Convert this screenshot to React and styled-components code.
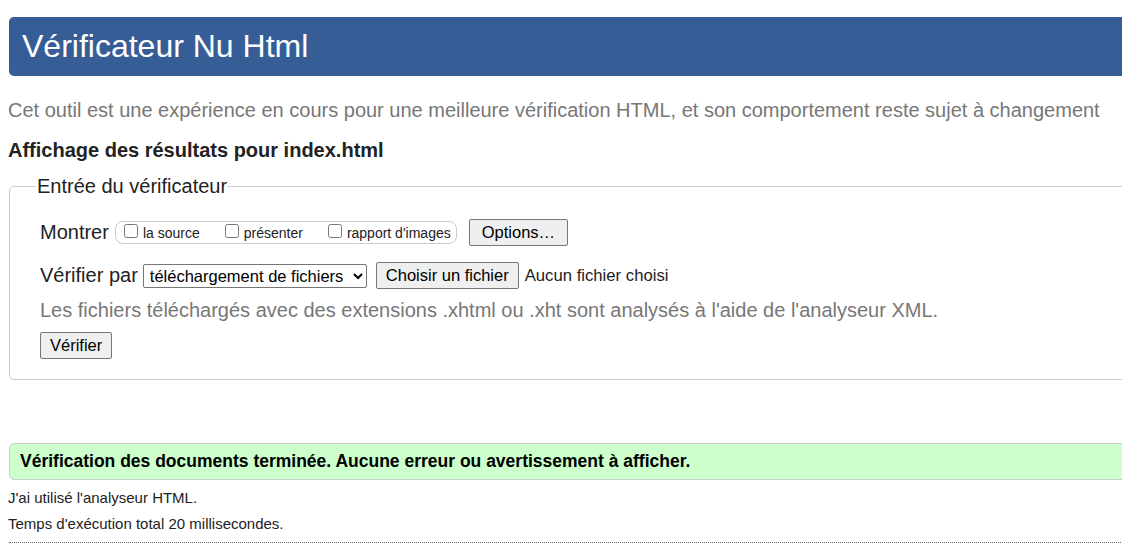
import styled, { createGlobalStyle } from "styled-components"

const GlobalStyle = createGlobalStyle`
	html, body {
		margin: 0;
		padding: 0;
		background: #fff;
		overflow: hidden;
	}
	body {
		font-family: "Liberation Sans", Arial, sans-serif;
		color: #222;
	}
`

export default function App() {
	const shows = ["la source", "présenter", "rapport d'images"]

	return (
		<Page>
			<GlobalStyle />
			<Header>
				<Title>Vérificateur Nu Html</Title>
			</Header>
			<Intro>
				Cet outil est une expérience en cours pour une meilleure vérification HTML, et son comportement reste sujet à changement
			</Intro>
			<Heading>Affichage des résultats pour index.html</Heading>

			<Fieldset>
				<Legend>Entrée du vérificateur</Legend>
				<FieldBody>
					<Row $space="16px">
						<RowLabel>Montrer</RowLabel>
						<CheckGroup>
							{shows.map(s => (
								<CheckItem key={s}>
									<input type="checkbox" />
									<span>{s}</span>
								</CheckItem>
							))}
						</CheckGroup>
						<Button $big>Options…</Button>
					</Row>
					<Row $gap="9px">
						<RowLabel $small>Vérifier par</RowLabel>
						<Select defaultValue="file">
							<option value="file">téléchargement de fichiers</option>
							<option value="url">adresse</option>
							<option value="text">saisie de texte</option>
						</Select>
						<FilePick>
							<Button>Choisir un fichier</Button>
							<span>Aucun fichier choisi</span>
						</FilePick>
					</Row>
					<Help>
						Les fichiers téléchargés avec des extensions .xhtml ou .xht sont analysés à l'aide de l'analyseur XML.
					</Help>
					<div>
						<Button>Vérifier</Button>
					</div>
				</FieldBody>
			</Fieldset>

			<Success>Vérification des documents terminée. Aucune erreur ou avertissement à afficher.</Success>
			<Details>
				<p>J'ai utilisé l'analyseur HTML.</p>
				<p>Temps d'exécution total 20 millisecondes.</p>
			</Details>
			<Rule />
		</Page>
	)
}

const Page = styled.div`
	width: 1122px;
	height: 553px;
	overflow: hidden;
	display: flex;
	flex-direction: column;
	padding-top: 17px;
	box-sizing: border-box;
`
const Header = styled.header`
	margin-left: 9px;
	margin-right: -20px;
	height: 59px;
	flex-shrink: 0;
	background: #365d95;
	border-radius: 5px 0 0 5px;
	display: flex;
	align-items: center;
	padding-left: 13px;
`
const Title = styled.h1`
	margin: 0;
	font-size: 32px;
	font-weight: normal;
	color: #fff;
`
const Intro = styled.p`
	margin: 22px 0 0 8px;
	font-size: 20px;
	line-height: 25px;
	color: #777;
	white-space: nowrap;
`
const Heading = styled.h2`
	margin: 16px 0 0 8px;
	font-size: 20px;
	line-height: 23px;
	font-weight: bold;
	color: #222;
`
const Fieldset = styled.fieldset`
	margin: 13px -20px 0 9px;
	padding: 0;
	border: 1px solid #ccc;
	border-radius: 5px;
	min-width: 0;
	flex-shrink: 0;
`
const Legend = styled.legend`
	padding: 0 1px;
	margin-left: 26px;
	font-size: 20px;
	line-height: 23px;
	color: #222;
`
const FieldBody = styled.div`
	display: flex;
	flex-direction: column;
	padding: 21px 0 20px 30px;
`
const Row = styled.div`
	display: flex;
	align-items: center;
	gap: ${p => p.$gap || "0"};
	margin-bottom: ${p => p.$space || "17px"};
`
const RowLabel = styled.span`
	font-size: 20px;
	color: #222;
	margin-right: ${p => (p.$small ? "-4px" : "6px")};
`
const CheckGroup = styled.span`
	display: inline-flex;
	align-items: center;
	height: 21px;
	border: 1px solid #ccc;
	border-radius: 8px;
	padding: 0 5px 0 6px;
	margin-right: 12px;
`
const CheckItem = styled.label`
	display: inline-flex;
	align-items: center;
	font-size: 14px;
	color: #222;
	margin-right: 23px;

	&:last-child {
		margin-right: 0;
	}

	input {
		margin: 0 5px 3px 2px;
		width: 14px;
		height: 14px;
	}
`
const Button = styled.button`
	font-family: "Liberation Sans", Arial, sans-serif;
	font-size: 16.5px;
	color: #000;
	background: #efefef;
	border: 1px solid #767676;
	border-radius: 2px;
	height: 27px;
	padding: 0 ${p => (p.$big ? "12px" : "9px")};
`
const Select = styled.select`
	font-family: "Liberation Sans", Arial, sans-serif;
	font-size: 16.5px;
	color: #000;
	background: #fff;
	border: 1px solid #767676;
	border-radius: 2px;
	height: 24px;
	width: 224px;
	padding: 0 2px;
`
const FilePick = styled.span`
	display: inline-flex;
	align-items: center;
	gap: 6px;
	font-size: 16.7px;
	color: #222;
`
const Help = styled.p`
	margin: -7px 0 10px;
	font-size: 20px;
	line-height: 23px;
	color: #777;
	white-space: nowrap;
`
const Success = styled.div`
	margin: 63px -20px 0 9px;
	height: 35px;
	flex-shrink: 0;
	background: #ccffcc;
	border: 1px solid #ccc;
	border-radius: 5px 0 0 5px;
	display: flex;
	align-items: center;
	padding-left: 10px;
	font-size: 17.5px;
	font-weight: bold;
	color: #000;
`
const Details = styled.div`
	margin: 9px 0 0 8px;
	font-size: 15px;
	color: #222;

	p {
		margin: 0 0 9px;
		line-height: 17px;
	}
`
const Rule = styled.hr`
	margin: 1px 1px 0 9px;
	border: 0;
	border-top: 1px dotted #666;
`
